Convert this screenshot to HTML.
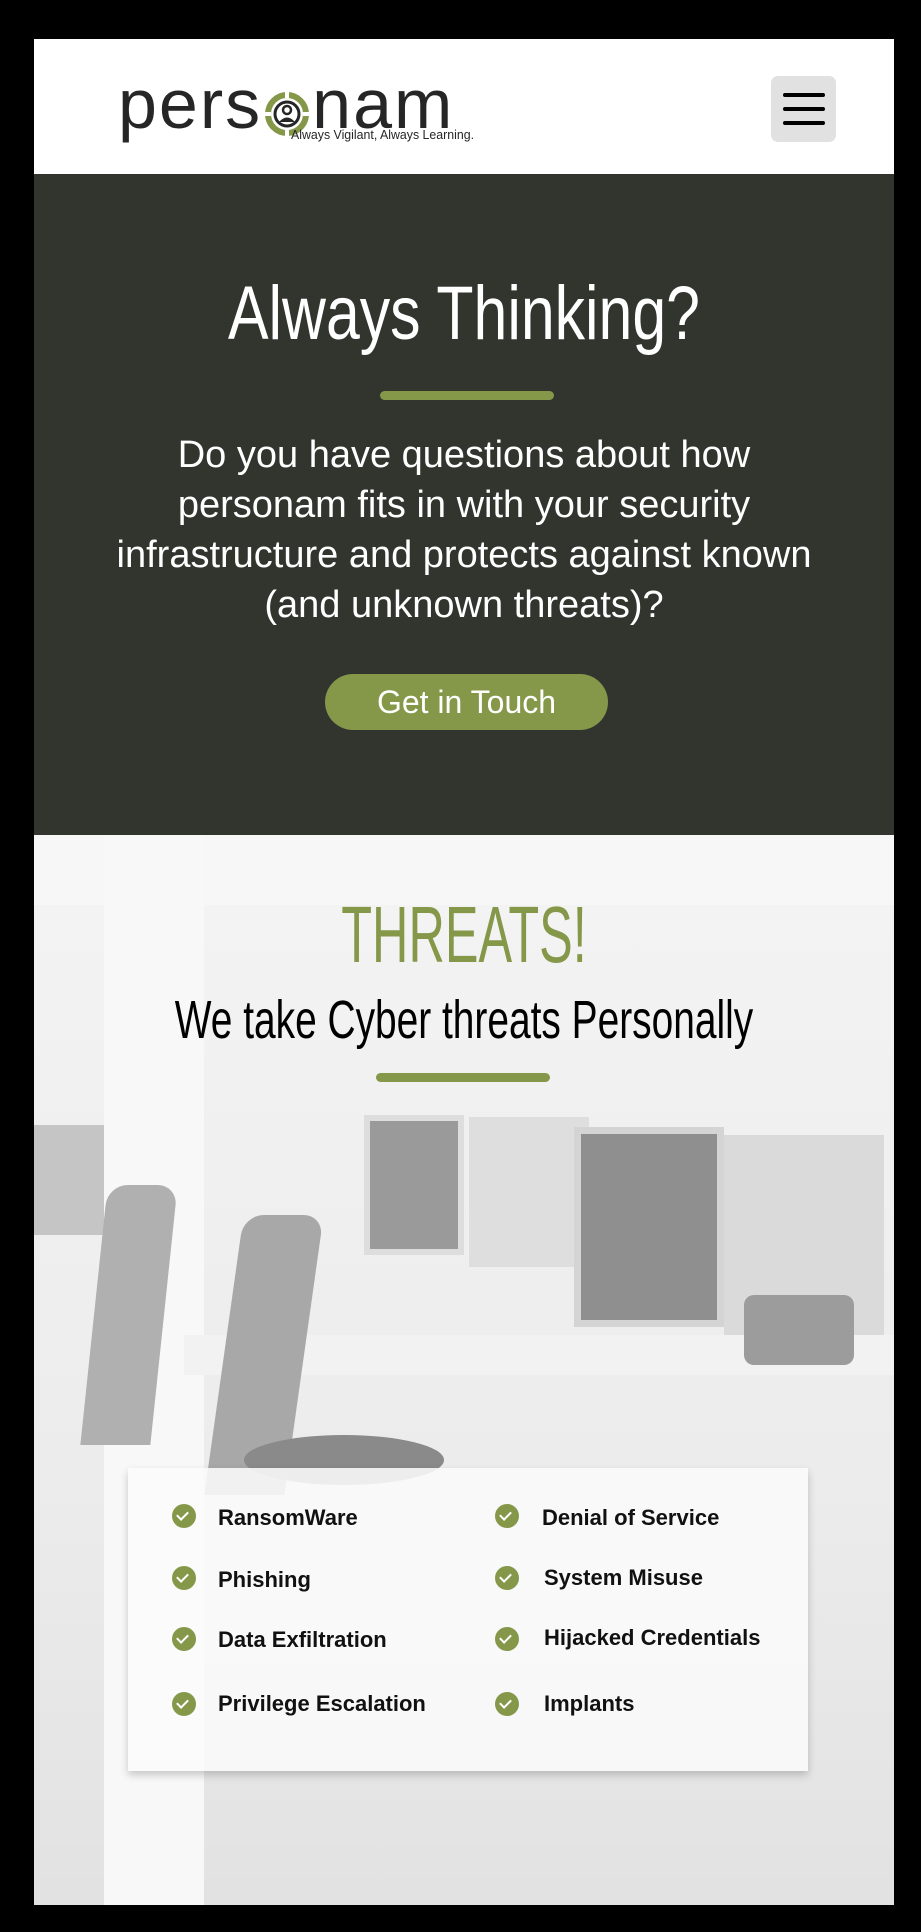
<!DOCTYPE html>
<html><head><meta charset="utf-8"><style>
*{margin:0;padding:0;box-sizing:border-box}
html,body{width:921px;height:1932px;background:#000;overflow:hidden;font-family:"Liberation Sans",sans-serif}
#page{position:absolute;left:34px;top:39px;width:860px;height:1866px;overflow:hidden}
header{position:absolute;left:0;top:0;width:860px;height:135px;background:#fff}
.logo{position:absolute;left:84px;top:28px;font-size:70px;color:#262626;line-height:75px;white-space:nowrap;letter-spacing:2px}
.logo span{display:inline-block;vertical-align:top}
.tag{position:absolute;left:257px;top:88px;font-size:13px;font-family:"Liberation Sans Narrow","Liberation Sans",sans-serif;color:#262626;white-space:nowrap;transform:scaleX(.95);transform-origin:left}
.burger{position:absolute;left:737px;top:37px;width:65px;height:66px;background:#e1e1e1;border-radius:7px}
.burger i{position:absolute;left:12px;width:42px;height:4px;background:#000;border-radius:2px}
.dark{position:absolute;left:0;top:135px;width:860px;height:661px;background:#32342e;text-align:center;color:#fff}
h1{position:absolute;left:0;width:860px;top:95px;font-family:"Liberation Sans Narrow","Liberation Sans",sans-serif;font-weight:normal;font-size:76px;line-height:90px;transform:scaleX(.8)}
.bar{position:absolute;height:9px;width:174px;background:#85984a;border-radius:5px}
.dark p{position:absolute;left:0;width:860px;top:256px;font-size:38px;line-height:50px}
.btn{position:absolute;left:291px;top:500px;width:283px;height:56px;border-radius:28px;background:#85984a;font-size:32px;line-height:56px}
.img{position:absolute;left:0;top:796px;width:860px;height:1070px;background:linear-gradient(#f4f4f4,#ececec 60%,#e2e2e2)}
.img div{position:absolute}
h2{position:absolute;left:0;width:860px;text-align:center;top:55px;font-family:"Liberation Sans Narrow","Liberation Sans",sans-serif;font-weight:normal;color:#85984a;font-size:80px;line-height:90px;transform:scaleX(.63)}
h3{position:absolute;left:0;width:860px;text-align:center;top:153px;font-family:"Liberation Sans Narrow","Liberation Sans",sans-serif;font-weight:normal;color:#000;font-size:54px;line-height:64px;transform:scaleX(.72)}
.card{position:absolute;left:94px;top:633px;width:680px;height:303px;background:rgba(250,250,250,.88);box-shadow:0 4px 8px rgba(0,0,0,.2)}
.it{position:absolute;font-weight:bold;font-size:22px;color:#111;white-space:nowrap;line-height:26px}
.ck{position:absolute;width:24px;height:24px;border-radius:50%;background:#85984a}
.ck:after{content:"";position:absolute;left:7px;top:5px;width:5px;height:9px;border:solid #fff;border-width:0 2.5px 2.5px 0;transform:rotate(45deg)}
</style></head><body><div id="page">
<header>
 <div class="logo"><span>pers</span><svg width="50" height="75" viewBox="0 0 50 75" style="vertical-align:top"><circle cx="25" cy="47" r="19" fill="none" stroke="#85984a" stroke-width="6"/><path d="M25 25v6M25 63v6M3 47h6M41 47h6" stroke="#fff" stroke-width="4"/><circle cx="25" cy="47" r="12" fill="none" stroke="#262626" stroke-width="3"/><circle cx="25" cy="43" r="4" fill="none" stroke="#262626" stroke-width="2.5"/><path d="M17 55q8-9 16 0z" fill="#262626"/></svg><span>nam</span></div>
 <div class="tag">Always Vigilant, Always Learning.</div>
 <div class="burger"><i style="top:17px"></i><i style="top:31px"></i><i style="top:45px"></i></div>
</header>
<div class="dark">
 <h1>Always Thinking?</h1>
 <div class="bar" style="left:346px;top:217px"></div>
 <p>Do you have questions about how<br>personam fits in with your security<br>infrastructure and protects against known<br>(and unknown threats)?</p>
 <div class="btn">Get in Touch</div>
</div>
<div class="img">
 <div style="left:0;top:0;width:860px;height:70px;background:#f7f7f7"></div>
 <div style="left:70px;top:0;width:100px;height:1070px;background:#f8f8f8"></div>
 <div style="left:330px;top:280px;width:100px;height:140px;background:#9a9a9a;border:6px solid #ddd"></div>
 <div style="left:435px;top:282px;width:120px;height:150px;background:#dedede"></div>
 <div style="left:540px;top:292px;width:150px;height:200px;background:#8f8f8f;border:7px solid #d4d4d4"></div>
 <div style="left:690px;top:300px;width:160px;height:200px;background:#dadada"></div>
 <div style="left:0;top:290px;width:70px;height:110px;background:#c5c5c5"></div>
 <div style="left:150px;top:500px;width:710px;height:40px;background:#f2f2f2"></div>
 <div style="left:60px;top:350px;width:70px;height:260px;background:#b0b0b0;border-radius:20px 20px 0 0;transform:skewX(-6deg)"></div>
 <div style="left:190px;top:380px;width:80px;height:280px;background:#a8a8a8;border-radius:20px 20px 0 0;transform:skewX(-8deg)"></div>
 <div style="left:210px;top:600px;width:200px;height:50px;background:#8a8a8a;border-radius:50%"></div>
 <div style="left:710px;top:460px;width:110px;height:70px;background:#9c9c9c;border-radius:10px"></div>
 <h2>THREATS!</h2>
 <h3>We take Cyber threats Personally</h3>
 <div class="bar" style="left:342px;top:238px"></div>
 <div class="card">
  <div class="ck" style="left:44px;top:36px"></div><div class="it" style="left:90px;top:37px">RansomWare</div>
  <div class="ck" style="left:44px;top:98px"></div><div class="it" style="left:90px;top:99px">Phishing</div>
  <div class="ck" style="left:44px;top:159px"></div><div class="it" style="left:90px;top:159px">Data Exfiltration</div>
  <div class="ck" style="left:44px;top:224px"></div><div class="it" style="left:90px;top:223px">Privilege Escalation</div>
  <div class="ck" style="left:367px;top:36px"></div><div class="it" style="left:414px;top:37px">Denial of Service</div>
  <div class="ck" style="left:367px;top:98px"></div><div class="it" style="left:416px;top:97px">System Misuse</div>
  <div class="ck" style="left:367px;top:159px"></div><div class="it" style="left:416px;top:157px">Hijacked Credentials</div>
  <div class="ck" style="left:367px;top:224px"></div><div class="it" style="left:416px;top:223px">Implants</div>
 </div>
</div>
</div></body></html>
